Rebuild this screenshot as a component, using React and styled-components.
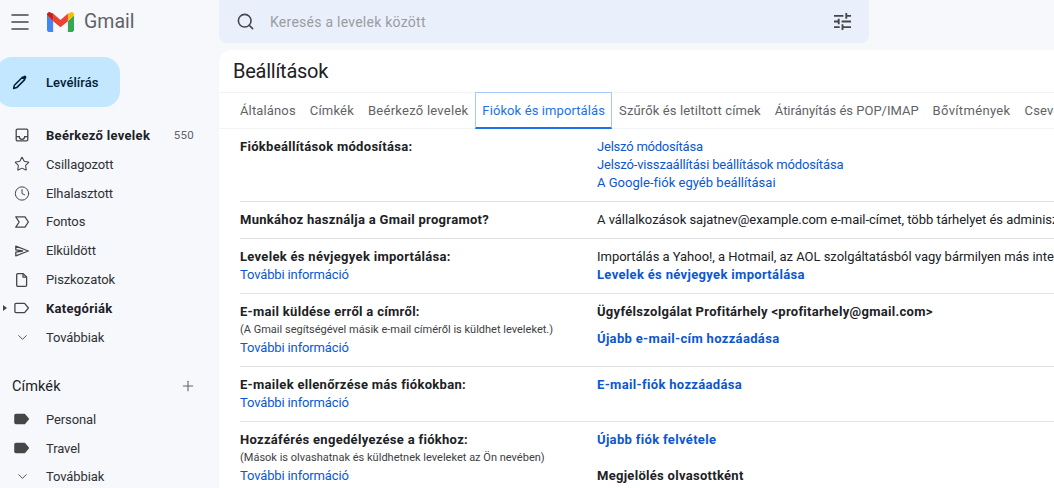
import React from "react";
import styled, { createGlobalStyle } from "styled-components";
import { Menu, Search, Star, Clock, ChevronDown, Plus } from "lucide-react";

const GlobalStyle = createGlobalStyle`
  html, body {
    margin: 0;
    width: 1054px;
    height: 488px;
    overflow: hidden;
    background: #f6f8fc;
    font-family: Roboto, "Liberation Sans", sans-serif;
    font-size: 13px;
    color: #202124;
  }
`;

const Page = styled.div`
  display: flex;
  width: 1054px;
  height: 488px;
  overflow: hidden;
`;

/* Sidebar */

const Sidebar = styled.aside`
  width: 219px;
  flex: none;
  display: flex;
  flex-direction: column;

  & > * {
    flex: none;
  }
`;

const Brand = styled.div`
  height: 43px;
  display: flex;
  align-items: center;
  padding-left: 8px;
`;

const MenuIcon = styled(Menu)`
  margin-right: 15px;
  color: #444746;
`;

const BrandName = styled.span`
  margin-left: 10px;
  font-size: 19.5px;
  color: #5f6368;
`;

const Compose = styled.button`
  margin: 14px 0 0 -4px;
  width: 124px;
  height: 50px;
  border: none;
  border-radius: 16px;
  background: #c2e7ff;
  color: #001d35;
  display: flex;
  align-items: center;
  padding: 0 0 0 16px;
  gap: 18px;
  font: 500 13px Roboto, sans-serif;
  letter-spacing: 0.05px;
`;

const NavList = styled.nav`
  margin-top: ${(p) => p.$top}px;
  display: flex;
  flex-direction: column;
`;

const NavRow = styled.div`
  position: relative;
  height: 28.85px;
  display: flex;
  align-items: center;
  padding-left: 14px;
  padding-right: 25px;
  color: ${(p) => (p.$bold ? "#202124" : "#303134")};
  font-weight: ${(p) => (p.$bold ? 700 : 400)};
  letter-spacing: ${(p) => (p.$bold ? "0.3px" : "-0.1px")};
`;

const IconSlot = styled.span`
  width: 16px;
  height: 16px;
  margin-right: 16px;
  flex: none;
  display: flex;
  align-items: center;
  justify-content: center;
  color: #444746;
`;

const NavLabel = styled.span`
  flex: 1;
`;

const Count = styled.span`
  font-size: 11.5px;
  font-weight: 400;
  letter-spacing: 0.25px;
  color: #5f6368;
`;

const Caret = styled.span`
  position: absolute;
  left: 3px;
  top: 11px;
  border-left: 4px solid #444746;
  border-top: 3.5px solid transparent;
  border-bottom: 3.5px solid transparent;
`;

const LabelsHead = styled.div`
  margin-top: 20px;
  height: 29px;
  display: flex;
  align-items: center;
  justify-content: space-between;
  padding: 0 23px 0 12px;
  font-size: 14.5px;
  letter-spacing: 0.1px;
  color: #202124;
`;

/* Main column */

const Main = styled.div`
  flex: 1;
  min-width: 0;
  display: flex;
  flex-direction: column;
`;

const SearchBar = styled.div`
  width: 650px;
  height: 43px;
  flex: none;
  border-radius: 0 0 8px 8px;
  background: #e9f0fb;
  display: flex;
  align-items: center;
  padding: 0 18px 0 17px;
  box-sizing: border-box;
  color: #444746;
`;

const SearchText = styled.span`
  flex: 1;
  margin-left: 15px;
  font-size: 14px;
  letter-spacing: 0.25px;
  color: #9a9ca0;
`;

const Panel = styled.main`
  margin-top: 7px;
  flex: 1;
  background: #fff;
  border-radius: 12px 0 0 0;
  overflow: hidden;
`;

const Title = styled.h1`
  margin: 0;
  height: 42px;
  padding-left: 14px;
  display: flex;
  align-items: center;
  font-size: 20px;
  font-weight: 400;
  letter-spacing: -0.25px;
  color: #202124;
`;

const Tabs = styled.div`
  height: 35px;
  display: flex;
  border-top: 1px solid #f1f3f4;
  border-bottom: 1px solid #f1f3f4;
  padding-left: 14px;
`;

const Tab = styled.div`
  height: 37px;
  margin-top: -1px;
  flex: none;
  padding: 0 ${(p) => (p.$active ? 6 : 7)}px;
  box-sizing: border-box;
  display: flex;
  align-items: center;
  white-space: nowrap;
  color: ${(p) => (p.$active ? "#1a73e8" : "#5f6368")};
  letter-spacing: ${(p) => p.$track}px;
  ${(p) =>
    p.$active &&
    `
    border: 1px solid #a8c7fa;
    border-bottom: 2px solid #1a73e8;
  `}
`;

const Rows = styled.div`
  padding-left: 21px;
`;

const Row = styled.section`
  display: flex;
  height: ${(p) => p.$height}px;
  box-sizing: border-box;
  padding-top: 9px;
  border-bottom: ${(p) => (p.$last ? "none" : "1px solid #e3e3e3")};
  line-height: 18px;
  white-space: nowrap;
  letter-spacing: -0.03px;
`;

const RowLabel = styled.div`
  width: 357px;
  flex: none;
`;

const RowTitle = styled.div`
  font-weight: 700;
  letter-spacing: 0.3px;
  color: #202124;
`;

const Hint = styled.div`
  font-size: 11px;
  letter-spacing: 0.01px;
  color: #3c4043;
  line-height: 18px;
`;

const RowValue = styled.div`
  display: flex;
  flex-direction: column;
`;

const Link = styled.a`
  display: block;
  color: #0b57d0;
  font-weight: ${(p) => (p.$bold ? 700 : 400)};
  letter-spacing: ${(p) => (p.$bold ? 0.33 : p.$track ?? -0.14)}px;
  text-decoration: none;
  margin-top: ${(p) => p.$gap || 0}px;
`;

const Strong = styled.div`
  font-weight: 700;
  letter-spacing: 0.29px;
  margin-top: ${(p) => p.$gap || 0}px;
`;

/* Icons */

const GmailLogo = () => (
  <svg width="27" height="20" viewBox="0 0 27 20">
    <path d="M0 3.2v14.9C0 19.2.8 20 1.9 20h4.2V9.2L0 3.2z" fill="#4285f4" />
    <path d="M20.9 20h4.2c1.1 0 1.9-.8 1.9-1.9V3.2l-6.1 6z" fill="#34a853" />
    <path d="M20.9 1.5v7.7l6.1-6V2.4C27 .4 24.6-.7 23.1.7z" fill="#fbbc04" />
    <path d="M6.1 9.2V1.5l7.4 6.4 7.4-6.4v7.7l-7.4 6z" fill="#ea4335" />
    <path d="M0 2.4v.8l6.1 6V1.5L3.9.7C2.4-.7 0 .4 0 2.4z" fill="#c5221f" />
  </svg>
);

const TuneIcon = () => (
  <svg width="17" height="17" viewBox="3 3 18 18" fill="currentColor">
    <path d="M3 17v2h6v-2H3zM3 5v2h10V5H3zm10 16v-2h8v-2h-8v-2h-2v6h2zM7 9v2H3v2h4v2h2V9H7zm14 4v-2H11v2h10zm-6-4h2V7h4V5h-4V3h-2v6z" />
  </svg>
);

const ComposeIcon = () => (
  <svg width="16" height="16" viewBox="0 0 16 16" fill="none">
    <path d="M11.6 2.1a1.6 1.6 0 0 1 2.3 2.3l-1.1 1.1-2.3-2.3z" fill="#001d35" />
    <path d="M10.4 3.3 2.4 11.3 1.6 14.4l3.1-.8 8-8z" stroke="#001d35" strokeWidth="1.5" strokeLinejoin="round" />
  </svg>
);

const InboxIcon = () => (
  <svg width="16" height="16" viewBox="0 0 16 16" fill="none" stroke="currentColor" strokeWidth="1.3">
    <rect x="2.2" y="2.2" width="11.6" height="11.6" rx="1.2" />
    <path d="M2.2 9.6h3.1a2.7 2.7 0 0 0 5.4 0h3.1" />
  </svg>
);

const ImportantIcon = () => (
  <svg width="16" height="16" viewBox="0 0 16 16" fill="none" stroke="currentColor" strokeWidth="1.3" strokeLinejoin="round">
    <path d="M1.8 2.8h9.2l3.4 5.2-3.4 5.2H1.8L5.2 8z" />
  </svg>
);

const SentIcon = () => (
  <svg width="16" height="16" viewBox="0 0 16 16" fill="none" stroke="currentColor" strokeWidth="1.3" strokeLinejoin="round">
    <path d="M1.8 3.2 14.4 8 1.8 12.8V9.2L8.6 8 1.8 6.8z" />
  </svg>
);

const DraftIcon = () => (
  <svg width="16" height="16" viewBox="0 0 16 16" fill="none" stroke="currentColor" strokeWidth="1.3" strokeLinejoin="round">
    <path d="M3.8 1.6h5.4l3.4 3.4v8.2a1.1 1.1 0 0 1-1.1 1.1H3.8a1.1 1.1 0 0 1-1.1-1.1V2.7a1.1 1.1 0 0 1 1.1-1.1z" />
    <path d="M9 1.8v3.4h3.4" />
  </svg>
);

const TagIcon = ({ filled }) => (
  <svg width="16" height="16" viewBox="0 0 16 16" fill={filled ? "currentColor" : "none"} stroke="currentColor" strokeWidth="1.3" strokeLinejoin="round">
    <path d="M1.9 3.4h8.7L14.4 8l-3.8 4.6H1.9a1 1 0 0 1-1-1V4.4a1 1 0 0 1 1-1z" />
  </svg>
);

const navItems = [
  { label: "Beérkező levelek", icon: <InboxIcon />, bold: true, count: "550" },
  { label: "Csillagozott", icon: <Star size={16} strokeWidth={1.6} /> },
  { label: "Elhalasztott", icon: <Clock size={17} strokeWidth={1.5} /> },
  { label: "Fontos", icon: <ImportantIcon /> },
  { label: "Elküldött", icon: <SentIcon /> },
  { label: "Piszkozatok", icon: <DraftIcon /> },
  { label: "Kategóriák", icon: <TagIcon />, bold: true, caret: true },
  { label: "Továbbiak", icon: <ChevronDown size={15} strokeWidth={1.5} /> },
];

const labelItems = [
  { label: "Personal", icon: <TagIcon filled /> },
  { label: "Travel", icon: <TagIcon filled /> },
  { label: "Továbbiak", icon: <ChevronDown size={15} strokeWidth={1.5} /> },
];

const tabs = [
  { name: "Általános", track: 0.14 },
  { name: "Címkék", track: 0.2 },
  { name: "Beérkező levelek", track: 0.25 },
  { name: "Fiókok és importálás", track: 0.1, active: true },
  { name: "Szűrők és letiltott címek", track: 0.13 },
  { name: "Átirányítás és POP/IMAP", track: -0.01 },
  { name: "Bővítmények", track: 0.34 },
  { name: "Csevegés és Meet", track: 0.2 },
];

const NavItem = ({ item }) => (
  <NavRow $bold={item.bold}>
    {item.caret && <Caret />}
    <IconSlot>{item.icon}</IconSlot>
    <NavLabel>{item.label}</NavLabel>
    {item.count && <Count>{item.count}</Count>}
  </NavRow>
);

const App = () => (
  <>
    <GlobalStyle />
    <Page>
      <Sidebar>
        <Brand>
          <MenuIcon size={24} strokeWidth={1.5} />
          <GmailLogo />
          <BrandName>Gmail</BrandName>
        </Brand>
        <Compose>
          <ComposeIcon />
          Levélírás
        </Compose>
        <NavList $top={14}>
          {navItems.map((item) => (
            <NavItem key={item.label} item={item} />
          ))}
        </NavList>
        <LabelsHead>
          Címkék
          <Plus size={16} strokeWidth={1.6} color="#5f6368" />
        </LabelsHead>
        <NavList $top={4}>
          {labelItems.map((item) => (
            <NavItem key={item.label} item={item} />
          ))}
        </NavList>
      </Sidebar>
      <Main>
        <SearchBar>
          <Search size={19} strokeWidth={2} />
          <SearchText>Keresés a levelek között</SearchText>
          <TuneIcon />
        </SearchBar>
        <Panel>
          <Title>Beállítások</Title>
          <Tabs>
            {tabs.map((t) => (
              <Tab key={t.name} $active={t.active} $track={t.track}>
                {t.name}
              </Tab>
            ))}
          </Tabs>
          <Rows>
            <Row $height={73}>
              <RowLabel>
                <RowTitle>Fiókbeállítások módosítása:</RowTitle>
              </RowLabel>
              <RowValue>
                <Link $track={-0.22}>Jelszó módosítása</Link>
                <Link $track={-0.16}>Jelszó-visszaállítási beállítások módosítása</Link>
                <Link $track={0.02}>A Google-fiók egyéb beállításai</Link>
              </RowValue>
            </Row>
            <Row $height={37}>
              <RowLabel>
                <RowTitle>Munkához használja a Gmail programot?</RowTitle>
              </RowLabel>
              <RowValue>
                <div>A vállalkozások sajatnev@example.com e-mail-címet, több tárhelyet és adminisztrációs eszközöket kaphatnak</div>
              </RowValue>
            </Row>
            <Row $height={55}>
              <RowLabel>
                <RowTitle>Levelek és névjegyek importálása:</RowTitle>
                <Link>További információ</Link>
              </RowLabel>
              <RowValue>
                <div>Importálás a Yahoo!, a Hotmail, az AOL szolgáltatásból vagy bármilyen más internetes levelezőből</div>
                <Link $bold>Levelek és névjegyek importálása</Link>
              </RowValue>
            </Row>
            <Row $height={73}>
              <RowLabel>
                <RowTitle>E-mail küldése erről a címről:</RowTitle>
                <Hint>(A Gmail segítségével másik e-mail címéről is küldhet leveleket.)</Hint>
                <Link>További információ</Link>
              </RowLabel>
              <RowValue>
                <Strong>Ügyfélszolgálat Profitárhely &lt;profitarhely@gmail.com&gt;</Strong>
                <Link $bold $gap={9}>Újabb e-mail-cím hozzáadása</Link>
              </RowValue>
            </Row>
            <Row $height={55}>
              <RowLabel>
                <RowTitle>E-mailek ellenőrzése más fiókokban:</RowTitle>
                <Link>További információ</Link>
              </RowLabel>
              <RowValue>
                <Link $bold>E-mail-fiók hozzáadása</Link>
              </RowValue>
            </Row>
            <Row $height={70} $last>
              <RowLabel>
                <RowTitle>Hozzáférés engedélyezése a fiókhoz:</RowTitle>
                <Hint>(Mások is olvashatnak és küldhetnek leveleket az Ön nevében)</Hint>
                <Link>További információ</Link>
              </RowLabel>
              <RowValue>
                <Link $bold>Újabb fiók felvétele</Link>
                <Strong $gap={18}>Megjelölés olvasottként</Strong>
              </RowValue>
            </Row>
          </Rows>
        </Panel>
      </Main>
    </Page>
  </>
);

export default App;
